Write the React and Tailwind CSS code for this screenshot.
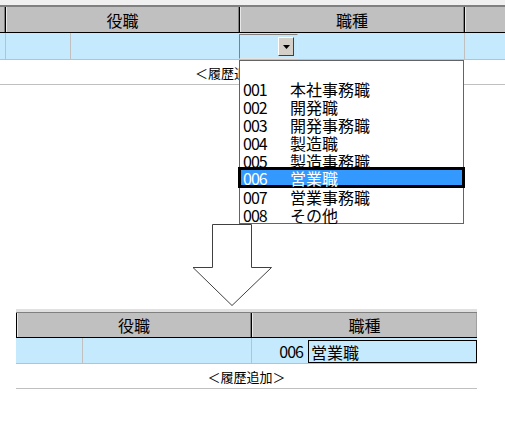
export default function App() {
  const items = [
    ["001", "本社事務職"],
    ["002", "開発職"],
    ["003", "開発事務職"],
    ["004", "製造職"],
    ["005", "製造事務職"],
    ["006", "営業職"],
    ["007", "営業事務職"],
    ["008", "その他"],
  ];
  return (
    <div className="w-[505px] h-[423px] bg-white relative overflow-hidden text-black font-['Noto_Sans_CJK_JP',sans-serif]">
      {/* top table */}
      <div className="h-[5px] bg-[#f0f0f0]" />
      <div className="h-[2px] bg-[#808080]" />
      <div className="flex h-[26px] bg-[#c0c0c0] border-b border-black">
        <div className="w-[6px] border-r border-black shadow-[inset_-1px_0_0_#808080]" />
        <div className="w-[234px] border-r border-black shadow-[inset_-1px_0_0_#808080,inset_1px_0_0_#e8e8e8] flex items-center justify-center text-[16px] leading-none">
          役職
        </div>
        <div className="w-[225px] border-r border-black shadow-[inset_-1px_0_0_#808080,inset_1px_0_0_#e8e8e8] flex items-center justify-center text-[16px] leading-none">
          職種
        </div>
        <div className="flex-1 shadow-[inset_1px_0_0_#e8e8e8]" />
      </div>
      <div className="flex h-[27px] bg-[#c5eafe] border-b border-[#c0c0c0]">
        <div className="w-[6px] border-r border-[#c0c0c0]" />
        <div className="w-[65px] border-r border-[#c0c0c0]" />
        <div className="w-[168px]" />
        <div className="w-[226px] border-r border-[#c0c0c0] pt-[1px]">
          <div className="w-[59px] h-[25px] border-t border-l border-[#808080] border-b border-r border-b-[#e4e4e4] border-r-[#e4e4e4] flex items-center justify-end pr-[3px]">
            <div className="w-[16px] h-[19px] bg-[#d4d0c8] border-t border-l border-white border-b border-r border-b-[#404040] border-r-[#404040] flex items-center justify-center">
              <svg width="7" height="4" viewBox="0 0 7 4">
                <polygon points="0,0 7,0 3.5,4" fill="#000" />
              </svg>
            </div>
          </div>
        </div>
        <div className="flex-1" />
      </div>
      <div className="h-[25px] border-b border-[#c0c0c0] flex items-center pl-[195px] text-[13px] leading-none">
        ＜履歴追加＞
      </div>

      {/* arrow */}
      <svg className="block ml-[192px] mt-[138px]" width="81" height="84" viewBox="0 0 81 84">
        <polygon
          points="20.5,1.5 59.5,1.5 59.5,44.5 79.5,44.5 40,82.5 1,44.5 20.5,44.5"
          fill="#fff"
          stroke="#404040"
          strokeWidth="1"
        />
      </svg>

      {/* bottom table */}
      <div className="ml-[16px] w-[461px] mt-[2px]">
        <div className="h-[3px] bg-[#e0e0e0]" />
        <div className="h-[1px] bg-[#808080]" />
        <div className="flex h-[25px] bg-[#c0c0c0] border-b border-l border-black">
          <div className="w-[235px] border-r border-black shadow-[inset_-1px_0_0_#808080,inset_1px_0_0_#e8e8e8] flex items-center justify-center text-[16px] leading-none">
            役職
          </div>
          <div className="flex-1 shadow-[inset_1px_0_0_#e8e8e8,inset_-1px_0_0_#a0a0a0] flex items-center justify-center text-[16px] leading-none">
            職種
          </div>
        </div>
        <div className="flex h-[26px] bg-[#c5eafe] border-b border-[#c0c0c0]">
          <div className="w-[67px] border-r border-[#c0c0c0]" />
          <div className="w-[169px] border-r border-[#c0c0c0]" />
          <div className="flex-1 flex justify-end items-start">
            <div className="h-[25px] flex items-center text-[16px] leading-none tracking-[-1px] mr-[5px]">006</div>
            <div className="w-[169px] h-[23px] mt-[2px] border border-black flex items-center pl-[2px] text-[16px] leading-none">
              営業職
            </div>
          </div>
        </div>
        <div className="h-[25px] border-b border-[#c0c0c0] flex items-center justify-center text-[13px] leading-none">
          ＜履歴追加＞
        </div>
      </div>

      {/* dropdown list overlay */}
      <div className="absolute left-[239px] top-[60px] w-[225px] h-[164px] border border-[#646464] bg-white pt-[19px] pl-[3px]">
        {items.map(([code, name]) => (
          <div
            key={code}
            className={
              code === "006"
                ? "h-[18px] flex items-center text-[16px] leading-none invisible"
                : "h-[18px] flex items-center text-[16px] leading-none"
            }
          >
            <span className="w-[47px] tracking-[-1px]">{code}</span>
            <span>{name}</span>
          </div>
        ))}
      </div>
      <div className="absolute left-[238px] top-[167px] w-[227px] h-[21px] border-[3px] border-black bg-[#3399ff] text-white flex items-center pl-[2px] text-[16px] leading-none">
        <span className="w-[47px] tracking-[-1px]">006</span>
        <span>営業職</span>
      </div>
    </div>
  );
}
